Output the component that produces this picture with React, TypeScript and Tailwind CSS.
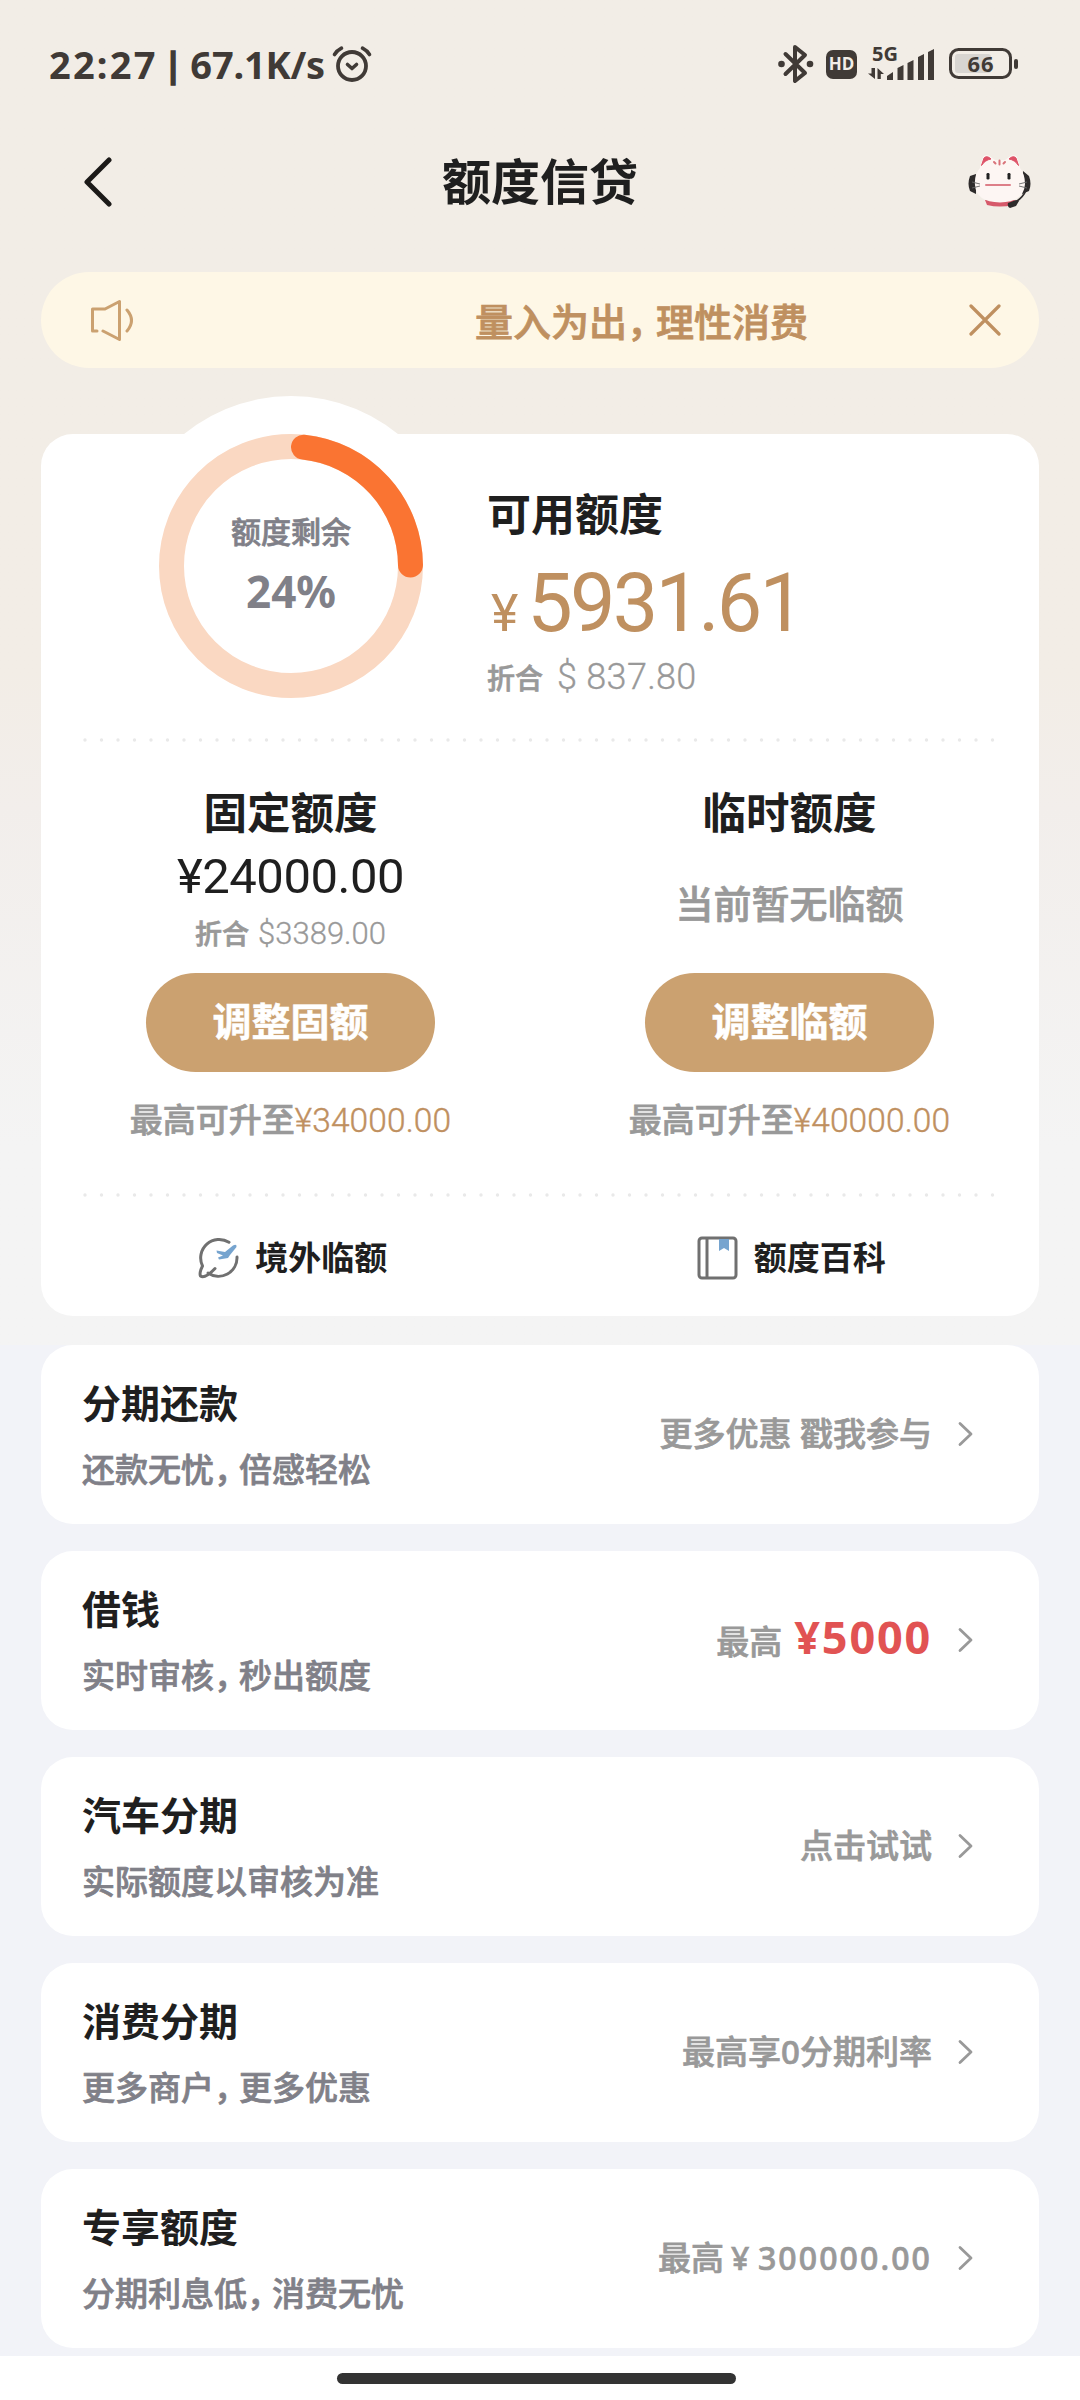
import type { ReactNode } from 'react'

interface Service {
  title: string
  desc: string
  extra: ReactNode
}

const services: Service[] = [
  {
    title: '分期还款',
    desc: '还款无忧，倍感轻松',
    extra: <span className="text-[33px]">更多优惠 戳我参与</span>,
  },
  {
    title: '借钱',
    desc: '实时审核，秒出额度',
    extra: (
      <>
        <span className="text-[33px]">最高</span>
        <span className="ml-[12px] text-[45px] font-bold tracking-[1.8px] text-[#e15353] [-webkit-text-stroke:0]">¥5000</span>
      </>
    ),
  },
  {
    title: '汽车分期',
    desc: '实际额度以审核为准',
    extra: <span className="text-[33px]">点击试试</span>,
  },
  {
    title: '消费分期',
    desc: '更多商户，更多优惠',
    extra: <span className="text-[33px]">最高享0分期利率</span>,
  },
  {
    title: '专享额度',
    desc: '分期利息低，消费无忧',
    extra: (
      <>
        <span className="text-[33px]">最高</span>
        <span className="ml-[7px] text-[32px] tracking-[1.7px]">¥</span>
        <span className="ml-[7px] text-[32px] tracking-[2.1px]">300000.00</span>
      </>
    ),
  },
]

// Full-width commas are set a little tighter than the characters around them
function CommaText({ text }: { text: string }) {
  const [before, after] = text.split('，')
  return (
    <>
      {before}
      {after && <span className="tracking-[-0.24em]">，</span>}
      {after}
    </>
  )
}

function StatusBar() {
  return (
    <div className="flex h-32 items-center pr-[61px] pl-[49px] text-[#403a36]">
      <span className="text-[38px] font-bold tracking-[2.2px]">22:27</span>
      <span className="ml-[6px] text-[34px] font-bold [-webkit-text-stroke:1.5px]">|</span>
      <span className="ml-[8px] text-[38px] font-bold tracking-[-0.2px]">67.1K/s</span>
      <svg className="ml-[7px]" width="40" height="40" viewBox="0 0 40 40" fill="none" stroke="currentColor" strokeLinecap="round" strokeLinejoin="round">
        <circle cx="20" cy="22" r="14" strokeWidth="3.8" />
        <path d="M15.500 20.500 20 24.500 24.500 20.500" strokeWidth="3.600" />
        <path d="M2.500 10.500Q5 6.500 9.500 4.200M37.500 10.500Q35 6.500 30.500 4.200" strokeWidth="3.600" />
      </svg>
      <svg className="ml-auto" width="38" height="40" viewBox="0 0 38 40" fill="none" stroke="currentColor" strokeLinecap="round" strokeLinejoin="round">
        <path d="M8.500 10 28 29 18 37V3L28 11 8.500 30" strokeWidth="4" />
        <circle cx="4.500" cy="20" r="3.300" fill="currentColor" stroke="none" />
        <circle cx="33" cy="20" r="3.300" fill="currentColor" stroke="none" />
      </svg>
      <span className="ml-[11px] flex h-[29px] w-[31px] items-center justify-center rounded-[7px] bg-[#403a36] font-['Open_Sans'] text-[17px] font-bold text-[#f2ede7]">
        HD
      </span>
      <div className="relative ml-[11px] h-[40px] w-[68px]">
        <span className="absolute top-[2px] left-[4px] text-[20px] leading-4 font-bold">5G</span>
        <svg width="68" height="40" viewBox="0 0 68 40" fill="currentColor">
          <path d="M7 24v11L0 29.500h3.500V24zM9.500 35V24l6.500 6h-3.200v5z" />
          <path d="M19 36v-4l6-4v8zM29.500 36V24l6-3v15zM39.500 36V19l6-3v20zM50 36V13l6-3v26zM60 36V8l6-3v31z" />
        </svg>
      </div>
      <svg className="ml-[13px]" width="70" height="32" viewBox="0 0 70 32">
        <rect x="1.500" y="1.500" width="60" height="28" rx="8" fill="none" stroke="currentColor" strokeWidth="3" />
        <rect x="6" y="6" width="36" height="19" rx="3" fill="#d8d5d1" />
        <rect x="65" y="11" width="4" height="10" rx="2" fill="currentColor" />
        <text x="32" y="24" textAnchor="middle" className="text-[22px] font-bold" fill="currentColor" letterSpacing="1">66</text>
      </svg>
    </div>
  )
}

function CatAvatar() {
  return (
    <svg width="64" height="56" viewBox="0 0 64 56">
      <path d="M8 20 2 22Q-1 30 2 37L8 40zM55 17l6 5Q64 30 61 37l-7 3z" fill="#2e2b2b" />
      <path d="M58 36Q55 44 46 49" fill="none" stroke="#2e2b2b" strokeWidth="1.800" />
      <path d="M17 46h30l-2 5Q32 54 19 51z" fill="#d6596a" />
      <path d="M12 14 15 3Q18-1 23 3L27 6H37L41 3Q46-1 49 3L52 14Q57 20 57 30 56 48 32 48.500 8 48 7 31 6 21 12 14z" fill="#fdf6f3" />
      <path d="M13.500 11.500 16 4q3-3 7 1-6 1-9.500 6.500z" fill="#de5268" stroke="#de5268" strokeWidth="1" strokeLinejoin="round" />
      <path d="M50.500 11.500 48 4q-3-3-7 1 6 1 9.500 6.500z" fill="#de5268" stroke="#de5268" strokeWidth="1" strokeLinejoin="round" />
      <path d="M31.500 6.500v4M26 8l1.500 1.500M37 8l-1.500 1.500" stroke="#d9737a" strokeWidth="2" strokeLinecap="round" />
      <rect x="18.500" y="19" width="3" height="6.500" rx="1.200" fill="#222" />
      <rect x="39.500" y="19" width="3" height="6.500" rx="1.200" fill="#222" />
      <path d="M18 31h24" stroke="#dd7f88" strokeWidth="2" strokeLinecap="round" />
      <path d="M4 28l8 2M4 34l8-2M51 30l8-2M51 32l8 2" stroke="#666" strokeWidth="0.900" />
      <path d="M40 49l8-3 3 1-3 5-6 2q-3-1-2-5z" fill="#2e2b2b" />
    </svg>
  )
}

function QuotaRing({ percent }: { percent: number }) {
  const length = 2 * Math.PI * 119.5
  return (
    <div className="relative flex h-[264px] w-[264px] flex-col items-center rounded-full bg-white pt-[76px] text-[#808088] ring-[38px] ring-white">
      <svg className="absolute inset-0" width="264" height="264" viewBox="0 0 264 264" fill="none" strokeWidth="25">
        <circle cx="132" cy="132" r="119.500" stroke="#fad8c2" />
        <circle
          cx="132"
          cy="132"
          r="119.500"
          stroke="#fa7432"
          strokeLinecap="round"
          strokeDasharray={`${(length * (percent - 0.8)) / 100} ${length}`}
          transform="rotate(-84 132 132)"
        />
      </svg>
      <span className="text-[30px] leading-[44px] font-medium [-webkit-text-stroke:0.7px]">额度剩余</span>
      <span className="mt-[11px] text-[44px] leading-[52px] font-bold">{percent}%</span>
    </div>
  )
}

function DottedLine() {
  return (
    <svg className="mx-auto block" width="914" height="4">
      <line x1="2" y1="2" x2="914" y2="2" stroke="#e9e9e9" strokeWidth="3.400" strokeLinecap="round" strokeDasharray="0 16.500" />
    </svg>
  )
}

function QuotaButton({ children }: { children: ReactNode }) {
  return (
    <button className="h-[99px] w-[289px] rounded-full bg-[#cba170] pb-[2px] text-[39px] font-bold text-white [-webkit-text-stroke:0.5px]">
      {children}
    </button>
  )
}

function MaxQuota({ amount }: { amount: string }) {
  return (
    <p className="flex h-[48px] items-baseline leading-[48px]">
      <span className="text-[33px] font-medium text-[#999] [-webkit-text-stroke:0.7px]">最高可升至</span>
      <span className="font-[Roboto] text-[33.500px] font-light tracking-[0.1px] text-[#bf9060] [-webkit-text-stroke:0.4px]">¥{amount}</span>
    </p>
  )
}

function ServiceCard({ title, desc, extra }: Service) {
  return (
    <div className="flex h-[179px] items-center justify-between rounded-[32px] bg-white pr-[64px] pl-[41px]">
      <div>
        <h2 className="text-[39px] leading-[56px] font-bold text-[#1f1f1f]">{title}</h2>
        <p className="mt-[15px] text-[33px] leading-[48px] font-medium text-[#808088] [-webkit-text-stroke:0.7px]">
          <CommaText text={desc} />
        </p>
      </div>
      <div className="mb-[2px] flex items-center font-medium text-[#999] [-webkit-text-stroke:0.7px]">
        <div className="flex items-baseline leading-[52px]">{extra}</div>
        <svg className="ml-[25px]" width="18" height="26" viewBox="0 0 18 26" fill="none" stroke="#999" strokeWidth="2.800" strokeLinecap="round" strokeLinejoin="round">
          <path d="M3 2.500 14 13 3 23.500" />
        </svg>
      </div>
    </div>
  )
}

export default function App() {
  return (
    <div className="flex h-[2400px] w-[1080px] flex-col overflow-hidden bg-[#f2f3f8] font-['Noto_Sans','Noto_Sans_CJK_SC',sans-serif] text-[#1f1f1f]">
      <div className="h-[1345px] bg-linear-to-b from-[#f2ede6] from-50% via-[#f2eeeb] via-60% to-[#f4f4f4] to-85%">
        <StatusBar />
        <header className="flex h-[108px] items-center justify-between pr-12 pl-[83px]">
          <svg width="29" height="54" viewBox="0 0 29 54" fill="none" stroke="#1c1a18" strokeWidth="5" strokeLinecap="round" strokeLinejoin="round">
            <path d="M26 5 4 27 26 49" />
          </svg>
          <h1 className="text-[49px] font-bold">额度信贷</h1>
          <CatAvatar />
        </header>

        <div className="mx-[41px] mt-[36px] flex h-[96px] items-center rounded-full bg-[#fef7e6] pr-[38px] pl-[48px] text-[#bf9060]">
          <svg width="46" height="44" viewBox="0 0 46 44" fill="none" stroke="#cba170" strokeWidth="3" strokeLinecap="round" strokeLinejoin="round">
            <path d="M8 33H3.500V11H16L30.500 3.500V41.500L14 33M38 12q9 10.500 0 21" />
          </svg>
          <span className="mt-[2px] ml-[340px] text-[38px] font-medium [-webkit-text-stroke:0.8px]">
            <CommaText text="量入为出，理性消费" />
          </span>
          <svg className="ml-auto" width="32" height="32" viewBox="0 0 32 32" fill="none" stroke="currentColor" strokeWidth="3.200" strokeLinecap="round">
            <path d="M2 2 30 30M30 2 2 30" />
          </svg>
        </div>

        <section className="mx-[41px] mt-[66px] h-[882px] rounded-[32px] bg-white">
          <div className="flex h-[304px] pl-[118px]">
            <QuotaRing percent={24} />
            <div className="relative ml-[64px] pt-[50px]">
              <h2 className="text-[44px] leading-[60px] font-bold">可用额度</h2>
              <p className="mt-[16px] flex h-[88px] items-baseline font-[Roboto] leading-[88px] text-[#bf9060]">
                <span className="ml-[4px] text-[52px]">¥</span>
                <span className="ml-[9px] text-[81px] tracking-[-2.8px]">5931.61</span>
              </p>
              <p className="mt-[5px] flex h-[48px] items-baseline leading-[48px] text-[#999]">
                <span className="text-[28px] font-medium [-webkit-text-stroke:0.7px]">折合</span>
                <span className="ml-[14px] font-[Roboto] text-[36px] font-light tracking-[0.3px] [-webkit-text-stroke:0.3px]">$ 837.80</span>
              </p>
            </div>
          </div>
          <DottedLine />
          <div className="grid h-[451px] grid-cols-2">
            <div className="flex flex-col items-center pt-[40px]">
              <h2 className="text-[43.500px] leading-[60px] font-bold">固定额度</h2>
              <p className="mt-[2px] h-[66px] font-[Roboto] text-[49px] leading-[66px] tracking-[-0.5px]">¥24000.00</p>
              <p className="flex h-[48px] items-baseline leading-[48px] text-[#999]">
                <span className="text-[27px] font-medium [-webkit-text-stroke:0.7px]">折合</span>
                <span className="ml-[9px] font-[Roboto] text-[31px] font-light [-webkit-text-stroke:0.3px]">$3389.00</span>
              </p>
              <div className="mt-[15px] h-[99px]">
                <QuotaButton>调整固额</QuotaButton>
              </div>
              <div className="mt-6">
                <MaxQuota amount="34000.00" />
              </div>
            </div>
            <div className="flex flex-col items-center pt-[40px]">
              <h2 className="text-[43.500px] leading-[60px] font-bold">临时额度</h2>
              <p className="mt-[33px] text-[38px] leading-[56px] font-medium text-[#999] [-webkit-text-stroke:0.7px]">当前暂无临额</p>
              <div className="mt-[42px] h-[99px]">
                <QuotaButton>调整临额</QuotaButton>
              </div>
              <div className="mt-6">
                <MaxQuota amount="40000.00" />
              </div>
            </div>
          </div>
          <DottedLine />
          <div className="grid h-[121px] grid-cols-2 pl-[3px] text-[33px] font-bold">
            <div className="flex items-center justify-center gap-[15px]">
              <svg width="42" height="42" viewBox="0 0 42 42" fill="none" stroke="#707070" strokeWidth="3" strokeLinecap="round">
                <path d="M31 5.300A18.500 18.500 0 0 0 4.500 29Q1 36 2.500 39 7 42 17 31.500" />
                <path d="M39 20A18.500 18.500 0 0 1 10 36" />
                <path d="M18.500 13.500 27 15 35 8.500Q39 6.500 38.500 10L32 18 30 21 21 22.500 20 20.500 25 18.500 19 16z" fill="#76a4cf" stroke="none" />
              </svg>
              境外临额
            </div>
            <div className="flex items-center justify-center gap-[15px] pl-[2px]">
              <svg width="42" height="44" viewBox="0 0 42 44" fill="none" stroke="#707070" strokeWidth="3">
                <rect x="2" y="2" width="37" height="40" rx="3" />
                <path d="M10 2v40" />
                <path d="M22 3h10v12l-5-3-5 3z" fill="#76a4cf" stroke="none" />
              </svg>
              额度百科
            </div>
          </div>
        </section>
      </div>

      <main className="flex h-[1011px] flex-col gap-[27px] px-[41px]">
        {services.map((s) => (
          <ServiceCard key={s.title} {...s} />
        ))}
      </main>

      <footer className="h-[44px] bg-white pt-[17px] pl-[337px]">
        <div className="h-[11px] w-[399px] rounded-full bg-[#333]" />
      </footer>
    </div>
  )
}
